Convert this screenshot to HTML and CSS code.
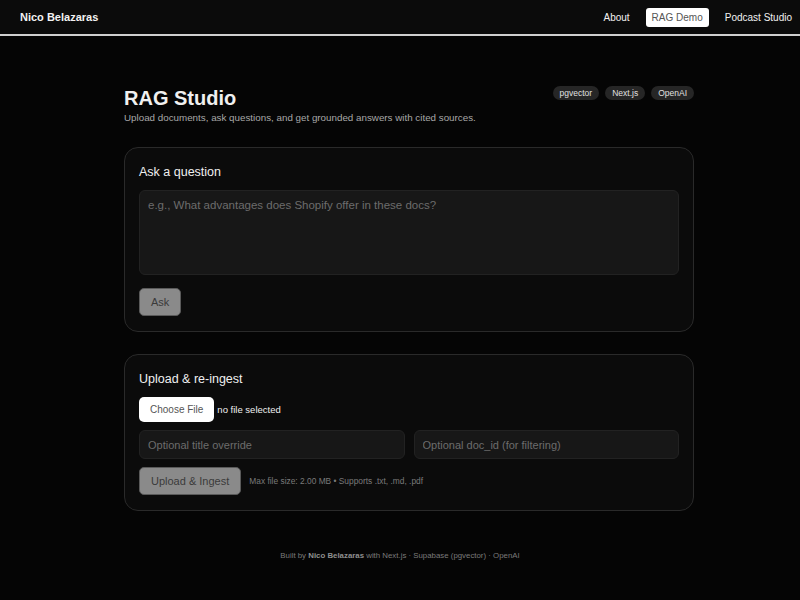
FILE: index.html
```html
<!DOCTYPE html>
<html lang="en">
<head>
    <meta charset="UTF-8">
    <meta name="viewport" content="width=device-width, initial-scale=1.0">
    <title>RAG Studio</title>
    <link rel="stylesheet" href="styles.css">
</head>
<body>

    <header class="topbar">
        <div class="brand">Nico Belazaras</div>
        <nav class="nav">
            <a href="#">About</a>
            <a href="#" class="active">RAG Demo</a>
            <a href="#">Podcast Studio</a>
        </nav>
    </header>

    <div class="page">
        <main class="container">
            <div class="page-head">
                <div>
                    <h1>RAG Studio</h1>
                    <p class="subtitle">Upload documents, ask questions, and get grounded answers with cited sources.</p>
                </div>
                <div class="badges">
                    <span class="badge">pgvector</span>
                    <span class="badge">Next.js</span>
                    <span class="badge">OpenAI</span>
                </div>
            </div>

            <section class="card">
                <h2>Ask a question</h2>
                <textarea class="question" placeholder="e.g., What advantages does Shopify offer in these docs?"></textarea>
                <div class="actions">
                    <button class="btn" disabled>Ask</button>
                </div>
            </section>

            <section class="card">
                <h2>Upload &amp; re-ingest</h2>
                <div class="file-row">
                    <span class="file-btn">Choose File</span>
                    <span class="file-name">no file selected</span>
                </div>
                <div class="fields">
                    <input type="text" placeholder="Optional title override">
                    <input type="text" placeholder="Optional doc_id (for filtering)">
                </div>
                <div class="actions">
                    <button class="btn" disabled>Upload &amp; Ingest</button>
                    <span class="hint">Max file size: 2.00 MB • Supports .txt, .md, .pdf</span>
                </div>
            </section>
        </main>
    </div>

    <footer class="footer">
        Built by <b>Nico Belazaras</b> with Next.js · Supabase (pgvector) · OpenAI
    </footer>

</body>
</html>
```

FILE: styles.css
```css
body {
    margin: 0;
    font-family: "Liberation Sans", Arial, sans-serif;
    background-color: #050505;
    color: #ededed;
}

.topbar {
    display: flex;
    justify-content: space-between;
    align-items: center;
    height: 34px;
    padding: 0 8px 0 20px;
    background-color: #0b0b0b;
    border-bottom: 2px solid #cfcfcf;
}

.brand {
    font-size: 11px;
    font-weight: bold;
    color: #f2f2f2;
}

.nav {
    display: flex;
    align-items: center;
    gap: 16px;
}

.nav a {
    font-size: 10px;
    color: #f2f2f2;
    text-decoration: none;
    padding: 4px 0;
}

.nav a.active {
    background-color: #ffffff;
    color: #555;
    padding: 4px 6px;
    border-radius: 3px;
}

.page {
    padding-left: 18px;
}

.container {
    width: 570px;
    margin: 0 auto;
    padding-top: 49px;
}

.page-head {
    display: flex;
    justify-content: space-between;
    align-items: flex-start;
}

h1 {
    margin: 0;
    font-size: 20px;
    font-weight: bold;
    color: #f0f0f0;
    line-height: 26px;
}

.subtitle {
    margin: 1px 0 0;
    font-size: 9.8px;
    color: #a8a8a8;
}

.badges {
    display: flex;
    gap: 6px;
    margin-top: 1px;
}

.badge {
    font-size: 8.5px;
    color: #e0e0e0;
    background-color: #262626;
    padding: 2px 7px;
    border-radius: 8px;
    line-height: 10px;
}

.card {
    margin-top: 24px;
    padding: 15px 14px 15px;
    background-color: #0b0b0b;
    border: 1px solid #2a2a2a;
    border-radius: 14px;
}

.card + .card {
    margin-top: 22px;
}

h2 {
    margin: 0 0 9px;
    font-size: 12.5px;
    font-weight: normal;
    color: #f0f0f0;
    line-height: 18px;
}

.question {
    display: block;
    width: 100%;
    height: 85px;
    box-sizing: border-box;
    padding: 8px 8px;
    background-color: #171717;
    border: 1px solid #222;
    border-radius: 6px;
    color: #ddd;
    font-family: inherit;
    font-size: 11.5px;
    resize: none;
}

.question::placeholder,
.fields input::placeholder {
    color: #6c6c6c;
}

.actions {
    display: flex;
    align-items: center;
    gap: 8px;
    margin-top: 13px;
}

.btn {
    background-color: #8a8a8a;
    color: #3a3a3a;
    border: 1px solid #5a5a5a;
    border-radius: 5px;
    padding: 0 11px;
    height: 28px;
    font-family: inherit;
    font-size: 11px;
}

.file-row {
    display: flex;
    align-items: center;
    gap: 3px;
}

.file-btn {
    display: inline-block;
    background-color: #ffffff;
    color: #555;
    font-size: 10px;
    padding: 0 11px;
    height: 25px;
    line-height: 25px;
    border-radius: 5px;
}

.file-name {
    font-size: 9.5px;
    color: #f0f0f0;
}

.fields {
    display: grid;
    grid-template-columns: 1fr 1fr;
    gap: 9px;
    margin-top: 8px;
}

.fields input {
    height: 29px;
    box-sizing: border-box;
    padding: 0 8px;
    background-color: #171717;
    border: 1px solid #222;
    border-radius: 6px;
    color: #ddd;
    font-family: inherit;
    font-size: 11px;
}

.fields + .actions {
    margin-top: 8px;
}

.hint {
    font-size: 8.4px;
    color: #7a7a7a;
}

.footer {
    margin-top: 40px;
    text-align: center;
    font-size: 7.85px;
    color: #7a7a7a;
}

.footer b {
    color: #8f8f8f;
}
```
